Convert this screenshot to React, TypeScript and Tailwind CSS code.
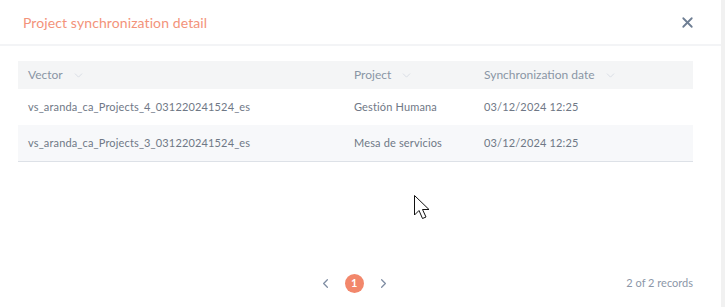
import { ChevronDown, ChevronLeft, ChevronRight, X } from "lucide-react";

const rows = [
  { vector: "vs_aranda_ca_Projects_4_031220241524_es", project: "Gestión Humana", date: "03/12/2024 12:25" },
  { vector: "vs_aranda_ca_Projects_3_031220241524_es", project: "Mesa de servicios", date: "03/12/2024 12:25" },
];

function HeadCell({ label }: { label: string }) {
  return (
    <div className="flex items-center gap-[9px]">
      <span>{label}</span>
      <ChevronDown size={13} strokeWidth={1.5} className="text-[#d3d8e0]" />
    </div>
  );
}

export default function App() {
  return (
    <div className="relative flex h-[307px] w-[725px] bg-white font-['Lato',sans-serif] text-[11px]">
      <div className="flex w-[721px] flex-col">
        <div className="flex h-[46px] items-center justify-between border-b-2 border-[#f3f4f6] pl-[23px] pr-[25px]">
          <h1 className="text-[14px] tracking-[0.1px] text-[#f3937a]">Project synchronization detail</h1>
          <X size={17} strokeWidth={2.5} className="text-[#6e7e93]" />
        </div>

        <div className="px-[18px] pt-[15px]">
          <div className="w-[675px] border-b border-[#dde1e7]">
            <div className="grid h-[28px] grid-cols-[326px_130px_1fr] items-center bg-[#f4f5f6] pl-[10px] text-[12px] text-[#8a95a5]">
              <HeadCell label="Vector" />
              <HeadCell label="Project" />
              <HeadCell label="Synchronization date" />
            </div>
            {rows.map((r, i) => (
              <div
                key={r.vector}
                className={`grid h-[36px] grid-cols-[326px_130px_1fr] items-center pl-[10px] tracking-[0.15px] text-[#6f7886] ${i % 2 ? "bg-[#f7f8fa]" : "bg-white"}`}
              >
                <span>{r.vector}</span>
                <span>{r.project}</span>
                <span>{r.date}</span>
              </div>
            ))}
          </div>
        </div>

        <div className="mt-auto flex h-[46px] items-center pb-[2px] pr-[28px]">
          <div className="flex flex-1 items-center justify-center gap-[12px] pl-[82px]">
            <ChevronLeft size={15} strokeWidth={2} className="text-[#7f8da3]" />
            <span className="flex h-[19px] w-[19px] items-center justify-center rounded-full bg-[#f2876b] text-[11px] font-bold text-white">
              1
            </span>
            <ChevronRight size={15} strokeWidth={2} className="text-[#7f8da3]" />
          </div>
          <span className="text-[#8c97a8]">2 of 2 records</span>
        </div>
      </div>
      <div className="w-[4px] bg-[#f1f1f1]" />

      <svg className="absolute left-[413px] top-[194px]" width="20" height="29" viewBox="0 0 20 29">
        <path d="M1.5 1.5 L1.5 21 L6 16.5 L9.5 24.5 L13 23 L9.5 15.5 L16 15.5 Z" fill="white" stroke="#111" strokeWidth="1" strokeLinejoin="miter" />
      </svg>
    </div>
  );
}
